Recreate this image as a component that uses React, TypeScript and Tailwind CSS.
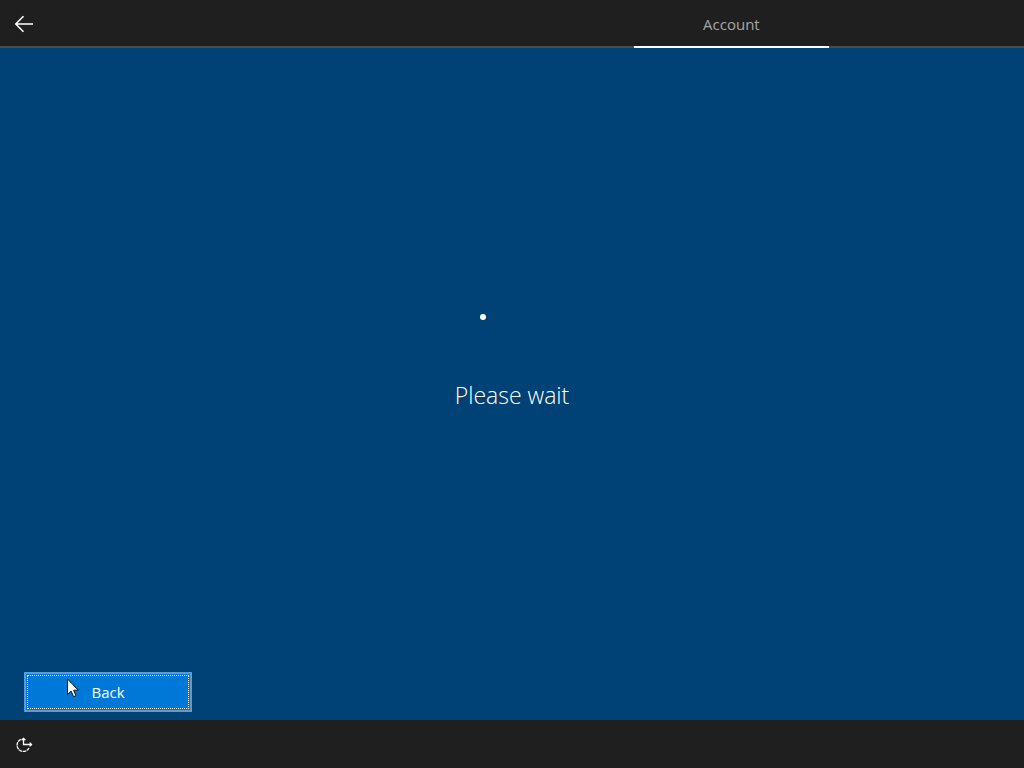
import React, { useState } from "react";

const steps = [
  { id: "account", label: "Account" },
  { id: "services", label: "" },
];

const BackArrow = () => (
  <svg
    width="20"
    height="20"
    viewBox="0 0 20 20"
    fill="none"
    stroke="currentColor"
    strokeWidth="1.6"
    aria-hidden="true"
  >
    <path d="M19 10H2M9.5 2.3L1.8 10l7.7 7.7" />
  </svg>
);

const EaseOfAccessIcon = () => (
  <svg
    width="18"
    height="18"
    viewBox="0 0 18 18"
    fill="none"
    stroke="currentColor"
    strokeWidth="1.3"
    aria-hidden="true"
  >
    <path d="M5.8 3.4A6.3 6.3 0 1 0 14.2 11.5" strokeDasharray="3.4 0.7" />
    <path d="M8.5 2.2V8.5H16.5" />
    <path d="M6.6 4.2L8.5 2.3l1.9 1.9M14.6 6.6l1.9 1.9-1.9 1.9" />
  </svg>
);

const Pointer = () => (
  <svg
    className="absolute left-10 top-1 pointer-events-none"
    width="13"
    height="20"
    viewBox="0 0 13 20"
    aria-hidden="true"
  >
    <path
      d="M1.5 1v15.5l3.6-3.4 2.5 5.6 2.4-1-2.4-5.5h4.7z"
      fill="#fff"
      stroke="#111"
      strokeWidth="1"
    />
  </svg>
);

const Spinner = () => (
  <div role="status" aria-label="Loading" className="flex h-16 w-16 items-center">
    <span className="h-1.5 w-1.5 rounded-full bg-white" />
  </div>
);

const App = () => {
  const [current, setCurrent] = useState("account");

  return (
    <div className="flex min-h-screen flex-col bg-[#004275] font-['Open_Sans','Noto_Sans',sans-serif] text-white">
      <header className="flex h-12 items-stretch bg-[#1f1f1f]">
        <div className="flex grow border-b-2 border-[#4b4b4b]">
          <button
            aria-label="Go back"
            className="flex w-12 items-center justify-center pt-0.5"
          >
            <BackArrow />
          </button>
        </div>
        <nav className="flex w-[38.1%]">
          {steps.map((step) => (
            <button
              key={step.id}
              aria-label={step.label || "Next step"}
              onClick={() => setCurrent(step.id)}
              className={`flex-1 border-b-2 pt-0.5 text-[15px] text-[#a6a6a6] ${
                step.id === current ? "border-white" : "border-[#4b4b4b]"
              }`}
            >
              {step.label}
            </button>
          ))}
        </nav>
      </header>

      <main className="flex flex-1 flex-col">
        <div className="flex flex-1 flex-col items-center justify-center gap-[30px] pb-6">
          <Spinner />
          <h1 className="text-[23px] leading-8 font-[350]">Please wait</h1>
        </div>
        <div className="px-6 pb-2">
          <button className="relative h-10 w-[168px] border-2 border-[#5d9bd8] bg-[#0078d7] p-px text-[15px]">
            <span className="flex h-full items-center justify-center border border-dotted border-white">
              Back
            </span>
            <Pointer />
          </button>
        </div>
      </main>

      <footer className="flex h-12 bg-[#1f1f1f]">
        <button
          aria-label="Ease of access"
          className="flex w-12 items-center justify-center pt-0.5"
        >
          <EaseOfAccessIcon />
        </button>
      </footer>
    </div>
  );
};

export default App;
